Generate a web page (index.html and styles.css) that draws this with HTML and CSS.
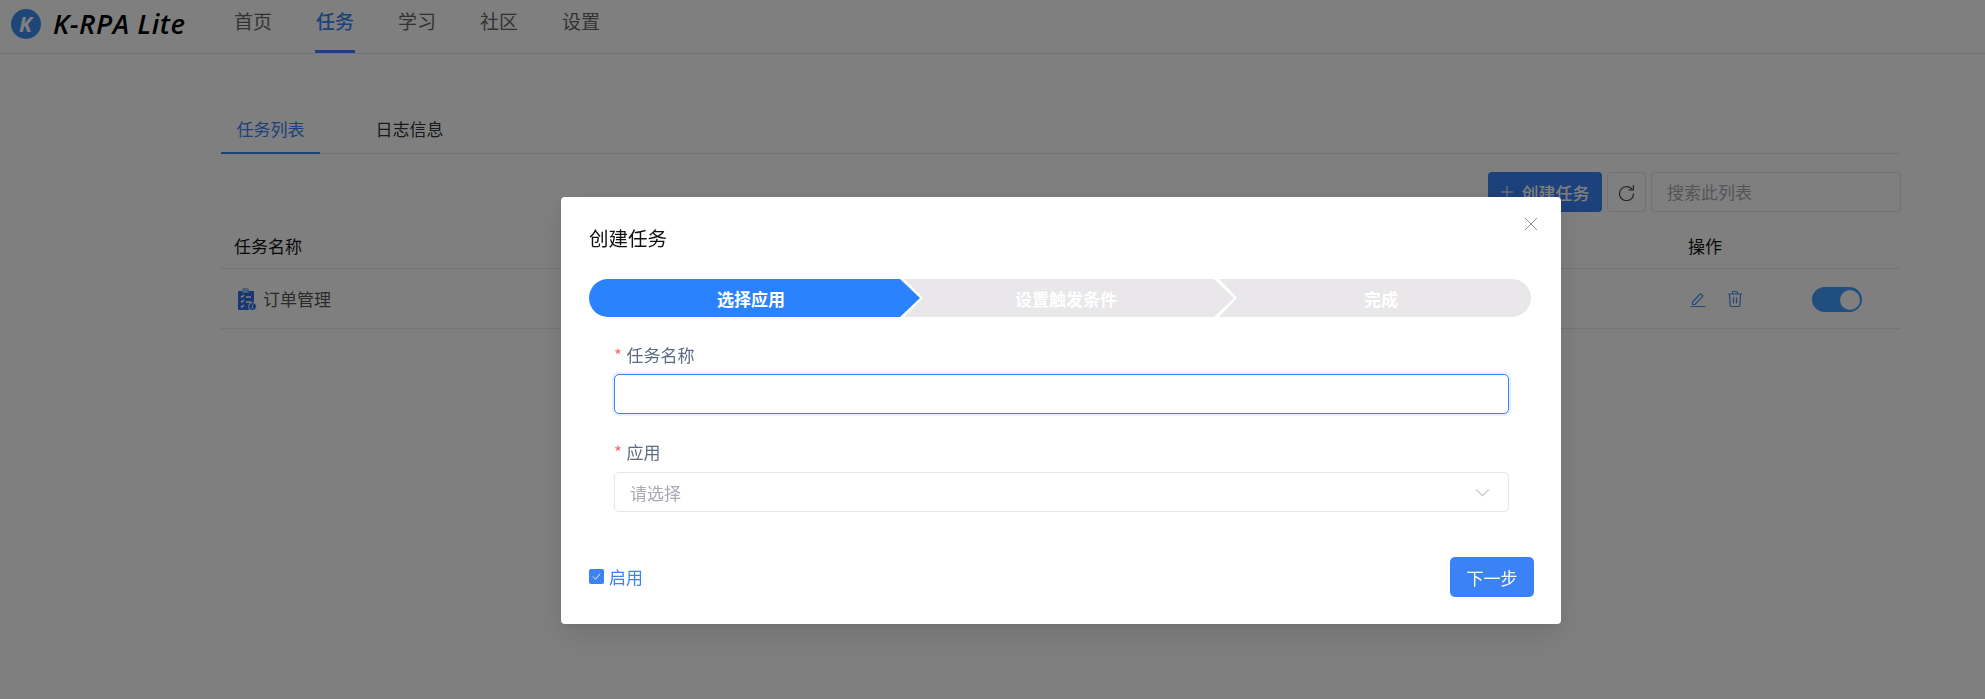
FILE: index.html
```html
<!DOCTYPE html>
<html lang="zh-CN">
<head>
<meta charset="utf-8">
<title>K-RPA Lite</title>
<link rel="stylesheet" href="styles.css">
</head>
<body>
<header class="topbar">
  <div class="brand">
    <svg class="brand-mark" viewBox="0 0 30 30" width="30" height="30"><circle cx="15" cy="15" r="15" fill="#3d8ef0"/><text x="14.500" y="22.500" text-anchor="middle" class="brand-k">K</text></svg>
    <span class="brand-name">K-RPA Lite</span>
  </div>
  <nav class="nav">
    <a class="nav-item">首页</a>
    <a class="nav-item nav-active">任务</a>
    <a class="nav-item">学习</a>
    <a class="nav-item">社区</a>
    <a class="nav-item">设置</a>
  </nav>
</header>
<main class="content">
  <div class="tabs">
    <span class="tab tab-active">任务列表</span>
    <span class="tab">日志信息</span>
  </div>
  <div class="toolbar">
    <button class="btn-primary"><svg viewBox="0 0 12 12" width="12" height="12"><path d="M6 0v12M0 6h12" stroke="#fff" stroke-width="1" fill="none"/></svg>创建任务</button>
    <button class="btn-icon"><svg viewBox="0 0 16 16" width="17" height="17"><path d="M13.600 5.600A6.600 6.600 0 1 0 14.600 9" stroke="#555" stroke-width="1.200" fill="none"/><path d="M14.500 1v4.600H10" stroke="#555" stroke-width="1.200" fill="none"/></svg></button>
    <div class="search">搜索此列表</div>
  </div>
  <div class="table-head">
    <span class="col-name">任务名称</span>
    <span class="col-ops">操作</span>
  </div>
  <div class="table-row">
    <span class="col-name row-name">
      <svg viewBox="0 0 20 24" width="20" height="24"><path d="M1 4h15a1 1 0 0 1 1 1v18H2a1 1 0 0 1-1-1z" fill="#2f6fe8"/><rect x="5" y="1" width="7" height="5" rx="2" fill="#8fc0e8"/><path d="M4 9l1 1 2-2M4 14l1 1 2-2M4 19l1 1 2-2M9 10h5M9 15h5" stroke="#fff" stroke-width="1.400" fill="none"/><circle cx="15.500" cy="19.500" r="4" fill="#2f6fe8" stroke="#fff"/><path d="M15.500 17.600v.8M15.500 19.200v2.400" stroke="#fff" stroke-width="1.200"/></svg>
      订单管理
    </span>
    <span class="col-ops ops">
      <svg viewBox="0 0 16 16" width="16" height="16"><path d="M2.500 11 10.500 2.500l2.500 2.500-8 8.500H2.500zM0.500 15.500h15" stroke="#4a90f5" stroke-width="1.200" fill="none"/></svg>
      <svg viewBox="0 0 16 18" width="16" height="18"><path d="M1 4h14M5.500 4V2.500a1 1 0 0 1 1-1h3a1 1 0 0 1 1 1V4M2.500 4l.6 11a1.500 1.500 0 0 0 1.500 1.500h6.800a1.500 1.500 0 0 0 1.500-1.500l.6-11M6.500 7.500v6M9.500 7.500v6" stroke="#4a90f5" stroke-width="1.200" fill="none"/></svg>
    </span>
    <span class="toggle"><span class="toggle-knob"></span></span>
  </div>
</main>

<div class="overlay">
  <section class="modal">
    <svg class="modal-close" viewBox="0 0 12 12" width="12" height="12"><path d="M0 0l12 12M12 0 0 12" stroke="#8a8f99" stroke-width="1" fill="none"/></svg>
    <h2 class="modal-title">创建任务</h2>
    <div class="steps">
      <div class="step step-first">选择应用</div>
      <div class="step step-mid">设置触发条件</div>
      <div class="step step-last">完成</div>
    </div>
    <form class="form">
      <label class="label"><span class="req">*</span>任务名称</label>
      <div class="input input-focus"></div>
      <label class="label label-second"><span class="req">*</span>应用</label>
      <div class="input select">
        <span class="placeholder">请选择</span>
        <svg viewBox="0 0 14 8" width="15" height="9"><path d="M1 1l6 6 6-6" stroke="#c0c4cc" stroke-width="1" fill="none"/></svg>
      </div>
    </form>
    <footer class="modal-foot">
      <span class="check"><span class="check-box"><svg viewBox="0 0 12 12" width="11" height="11"><path d="M2 6l3 3 5-6" stroke="#fff" stroke-width="1" fill="none"/></svg></span>启用</span>
      <button class="btn-next">下一步</button>
    </footer>
  </section>
</div>
</body>
</html>
```
FILE: styles.css
```css
* { box-sizing: border-box; }
html, body { margin: 0; height: 699px; overflow: hidden; }
body {
  background: #fff;
  color: #555;
  font-family: "Noto Sans CJK SC", "Noto Sans", sans-serif;
  font-size: 17px;
}

.topbar {
  display: flex;
  height: 54px;
  border-bottom: 1px solid #e5e7eb;
}
.brand {
  display: flex;
  align-items: center;
  width: 234px;
  padding-left: 11px;
  height: 48px;
}
.brand-mark { flex: none; }
.brand-k {
  font: italic 700 21px "Open Sans", sans-serif;
  fill: #fff;
}
.brand-name {
  margin-left: 12px;
  font: italic 600 27.500px/32px "Open Sans", sans-serif;
  color: #000;
  letter-spacing: 0.600px;
  white-space: nowrap;
}
.nav { display: flex; gap: 44px; }
.nav-item {
  display: block;
  height: 53px;
  padding-top: 8px;
  font-size: 19px;
  line-height: 26px;
  color: #666;
}
.nav-active {
  margin: 0 -1px;
  padding: 8px 1px 0;
  color: #3b82f6;
  font-weight: 500;
  border-bottom: 3px solid #3b82f6;
}

.content {
  width: 1679px;
  margin-left: 221px;
}
.tabs {
  display: flex;
  height: 46px;
  margin-top: 54px;
  border-bottom: 1px solid #e5e7eb;
  color: #333;
}
.tab {
  width: 99px;
  height: 46px;
  padding-top: 9px;
  text-align: center;
  line-height: 24px;
}
.tab + .tab { margin-left: 40px; }
.tab-active {
  color: #3b82f6;
  border-bottom: 2px solid #3b82f6;
}

.toolbar {
  display: flex;
  justify-content: flex-end;
  gap: 5px;
  margin: 18px -1px 0 0;
  height: 40px;
}
.btn-primary {
  display: flex;
  align-items: center;
  justify-content: center;
  gap: 9px;
  width: 114px;
  height: 40px;
  padding: 0;
  border: 0;
  border-radius: 4px;
  background: #3b82f6;
  color: #fff;
  font: inherit;
  font-weight: 500;
}
.btn-icon {
  display: flex;
  align-items: center;
  justify-content: center;
  width: 39px;
  height: 40px;
  padding: 0;
  background: #fff;
  border: 1px solid #e2e4e8;
  border-radius: 4px;
}
.search {
  width: 250px;
  height: 40px;
  padding: 0 15px;
  line-height: 38px;
  border: 1px solid #e2e4e8;
  border-radius: 4px;
  color: #a8abb2;
}

.table-head, .table-row {
  display: flex;
  align-items: center;
  border-bottom: 1px solid #e5e7eb;
  position: relative;
}
.table-head {
  height: 57px;
  padding-top: 11px;
  color: #111;
}
.table-row { height: 60px; }
.col-name { margin-left: 13px; display: flex; align-items: center; }
.col-ops { position: absolute; left: 1467px; line-height: 25px; }
.table-head .col-ops { top: 21px; }
.row-name svg { margin: 0 6px 0 3px; }
.ops { display: flex; gap: 21px; align-items: center; top: 21px; left: 1469px; }
.toggle {
  position: absolute;
  left: 1591px;
  top: 18px;
  width: 50px;
  height: 25px;
  border-radius: 13px;
  background: #409eff;
}
.toggle-knob {
  position: absolute;
  right: 2px;
  top: 2.500px;
  width: 20px;
  height: 20px;
  border-radius: 50%;
  background: #fff;
}

.overlay {
  position: fixed;
  inset: 0;
  background: rgba(0, 0, 0, .5);
  display: flex;
  justify-content: center;
  align-items: flex-start;
}
.modal {
  position: relative;
  width: 1000px;
  height: 427px;
  margin: 197px 0 0 137px;
  padding: 28px 27px 0 28px;
  background: #fff;
  border-radius: 4px;
  box-shadow: 0 12px 32px rgba(0, 0, 0, .1), 0 2px 8px rgba(0, 0, 0, .06);
}
.modal-close { position: absolute; right: 24px; top: 21px; }
.modal-title {
  margin: 0;
  font-size: 19.500px;
  font-weight: 400;
  line-height: 26px;
  color: #111;
}
.steps {
  display: flex;
  width: 942px;
  height: 38px;
  margin-top: 28px;
}
.step {
  height: 38px;
  display: flex;
  align-items: center;
  justify-content: center;
  color: #fff;
  font-size: 17px;
  font-weight: 700;
  background: #e9e7ea;
}
.step-first {
  flex: 0 0 331px;
  padding-right: 7px;
  background: #2b82ff;
  border-radius: 19px 0 0 19px;
  clip-path: polygon(0 0, 311px 0, 100% 50%, 311px 100%, 0 100%);
}
.step-mid {
  flex: 0 0 330px;
  margin-left: -16px;
  padding-right: 6px;
  clip-path: polygon(0 0, 310px 0, 100% 50%, 310px 100%, 0 100%, 19px 50%);
}
.step-last {
  flex: 0 0 312px;
  margin-left: -15px;
  padding-left: 12px;
  border-radius: 0 19px 19px 0;
  clip-path: polygon(0 0, 100% 0, 100% 100%, 0 100%, 18px 50%);
}

.form { padding: 28px 0 0 25px; }
.label {
  display: block;
  height: 29px;
  line-height: 20px;
  color: #5d6a80;
}
.label-second { margin-top: 28px; height: 30px; }
.req {
  display: inline-block;
  width: 12.500px;
  color: #f56c6c;
}
.input {
  width: 895px;
  height: 40px;
  border: 1px solid #e4e6ea;
  border-radius: 5px;
  background: #fff;
}
.input-focus {
  border-color: #3b82f6;
  box-shadow: 0 0 0 2px #e6f0fe;
}
.select {
  display: flex;
  align-items: center;
  justify-content: space-between;
  padding: 0 18px 0 15px;
}
.placeholder { color: #a8abb2; }

.modal-foot {
  display: flex;
  align-items: center;
  justify-content: space-between;
  width: 945px;
  height: 40px;
  margin-top: 45px;
}
.check {
  display: flex;
  align-items: center;
  gap: 5px;
  padding-bottom: 1px;
  color: #3b82f6;
  font-size: 17px;
}
.check-box {
  display: flex;
  align-items: center;
  justify-content: center;
  width: 15px;
  height: 15px;
  border-radius: 2px;
  background: #3b82f6;
}
.btn-next {
  width: 84px;
  height: 40px;
  padding: 0;
  border: 0;
  border-radius: 5px;
  background: #3b82f6;
  color: #fff;
  font: inherit;
  font-size: 17px;
}
```
